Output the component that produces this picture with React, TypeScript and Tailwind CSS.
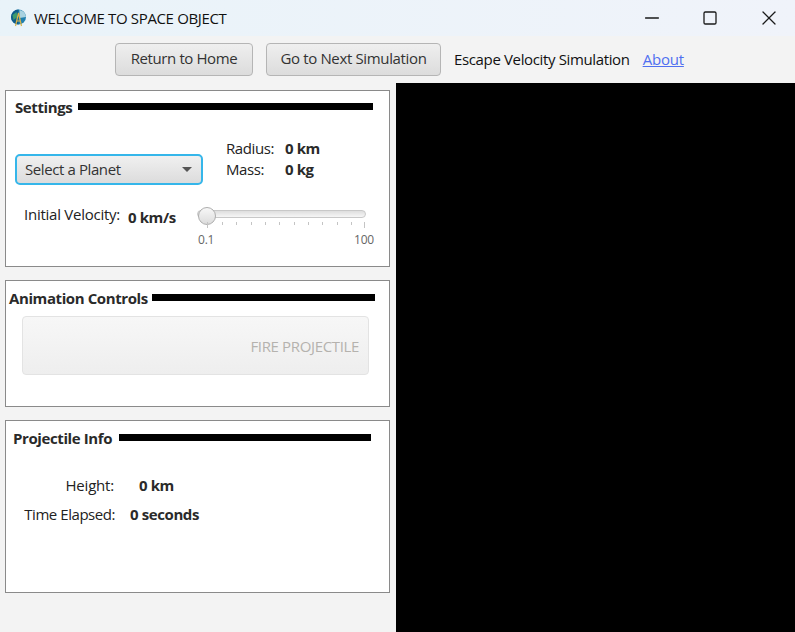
import type { ReactNode } from 'react';
import { Minus, Square, X } from 'lucide-react';

const minorTicks = [222, 236, 251, 265, 279, 294, 308, 322, 337, 351];

function AppIcon() {
  return (
    <svg width="17" height="18" viewBox="0 0 17 18" aria-hidden className="shrink-0">
      <circle cx="8.5" cy="8" r="7.5" fill="#1f7fae" />
      <path d="M1 8 A7.5 7.5 0 0 1 8.5 .5 L8.5 15.5 A7.5 7.5 0 0 1 1 8Z" fill="#0f5c8a" />
      <path d="M9.5 1 A7.5 7.5 0 0 1 16 8 L9.5 9Z" fill="#a9d2e0" />
      <path d="M2.5 6 L6.5 3 L7.5 8 L3.5 11Z" fill="#3d9b6d" />
      <path d="M5.5 17 L8.5 4 L11.5 17 M6.5 12 H10.5" fill="none" stroke="#d9b44a" strokeWidth="1.2" />
    </svg>
  );
}

function Panel({
  title,
  gap,
  pad,
  barWidth,
  className,
  children,
}: {
  title: string;
  gap: string;
  pad: string;
  barWidth: string;
  className: string;
  children: ReactNode;
}) {
  return (
    <section className={`border border-[#8a8a8a] bg-white ${className}`}>
      <div className={`flex items-start ${pad} ${gap}`}>
        <h3 className="text-[15px] leading-5 font-bold tracking-[-0.4px] text-[#2a2a2a]">{title}</h3>
        <div className={`mt-[6px] h-[7px] bg-black ${barWidth}`} />
      </div>
      {children}
    </section>
  );
}

export default function App() {
  return (
    <div className="flex h-[632px] w-[795px] flex-col overflow-hidden bg-[#f3f3f3] font-['Open_Sans',sans-serif] text-[#222]">
      <header className="flex h-9 shrink-0 items-center bg-gradient-to-r from-[#e9f3f9] to-[#f0f3fa] pl-[10px]">
        <AppIcon />
        <span className="ml-[7px] text-[15px] tracking-[-0.35px] text-[#111]">WELCOME TO SPACE OBJECT</span>
        <div className="ml-auto flex items-center text-[#1a1a1a]">
          <Minus size={22} absoluteStrokeWidth strokeWidth={1.3} />
          <Square size={16} absoluteStrokeWidth strokeWidth={1.3} className="ml-[39px]" />
          <X size={24} absoluteStrokeWidth strokeWidth={1.3} className="mr-[14px] ml-[39px]" />
        </div>
      </header>

      <nav className="flex h-[47px] shrink-0 items-start pt-[7px] pl-[115px] text-[15px]">
        <button className="h-[33px] w-[138px] rounded-[4px] border border-[#b5b5b5] bg-gradient-to-b from-[#efefef] to-[#dcdcdc] pb-[2px] tracking-[-0.4px] text-[#333]">
          Return to Home
        </button>
        <button className="ml-[13px] h-[33px] w-[175px] rounded-[4px] border border-[#b5b5b5] bg-gradient-to-b from-[#efefef] to-[#dcdcdc] pb-[2px] tracking-[-0.35px] text-[#333]">
          Go to Next Simulation
        </button>
        <span className="mt-[6px] ml-[13px] leading-5 tracking-[-0.36px] text-[#111]">Escape Velocity Simulation</span>
        <a className="mt-[6px] ml-[13px] leading-5 tracking-[-0.2px] text-[#4f6ff0] underline">About</a>
      </nav>

      <main className="flex min-h-0 flex-1">
        <aside className="flex w-[396px] shrink-0 flex-col pt-[7px] pl-[5px]">
          <Panel title="Settings" pad="pt-[6px] pl-[9px]" gap="gap-[6px]" barWidth="w-[295px]" className="h-[177px] w-[385px]">
            <div className="mt-[21px] flex items-start pl-[9px]">
              <div className="mt-[16px] flex h-[31px] w-[188px] items-center justify-between rounded-[5px] border-2 border-[#35b6ea] bg-gradient-to-b from-[#f0f0f0] to-[#dcdcdc] pr-[9px] pl-[8px]">
                <span className="text-[15px] tracking-[-0.4px] text-[#333]">Select a Planet</span>
                <span className="h-0 w-0 border-x-[5px] border-t-[5px] border-x-transparent border-t-[#555]" />
              </div>
              <dl className="ml-[23px] grid grid-cols-[59px_auto] text-[15px] leading-[21px] tracking-[-0.4px]">
                <dt className="text-[#222]">Radius:</dt>
                <dd className="font-bold text-[#2a2a2a]">0 km</dd>
                <dt className="text-[#222]">Mass:</dt>
                <dd className="font-bold text-[#2a2a2a]">0 kg</dd>
              </dl>
            </div>
            <div className="mt-[15px] flex items-start pl-[18px]">
              <span className="mt-[4px] w-[104px] text-[15px] leading-5 tracking-[-0.25px] text-[#222]">Initial Velocity:</span>
              <span className="mt-[7px] w-[69px] text-[15px] leading-5 font-bold tracking-[-0.4px] text-[#2a2a2a]">0 km/s</span>
              <div className="w-[180px]">
                <div className="relative mt-[10px] h-[8px] w-[169px] rounded-full border border-[#c8c8c8] bg-gradient-to-b from-[#dedede] to-[#f6f6f6]">
                  <span className="absolute top-[-4px] left-[0px] h-[18px] w-[18px] rounded-full border border-[#adadad] bg-gradient-to-b from-[#f7f7f7] to-[#dcdcdc]" />
                </div>
                <div className="relative h-[10px]">
                  <span className="absolute top-[4px] left-[10px] h-[6px] w-px bg-[#c4c4c4]" />
                  {minorTicks.map((x) => (
                    <span key={x} className="absolute top-[4px] h-[3px] w-px bg-[#c4c4c4]" style={{ left: x - 197 }} />
                  ))}
                  <span className="absolute top-[4px] left-[167px] h-[6px] w-px bg-[#c4c4c4]" />
                </div>
                <div className="mt-[4px] flex w-[177px] justify-between pl-[1px] text-[12px] leading-4 tracking-[-0.2px] text-[#666]">
                  <span>0.1</span>
                  <span>100</span>
                </div>
              </div>
            </div>
          </Panel>

          <Panel title="Animation Controls" pad="pt-[7px] pl-[3px]" gap="gap-[4px]" barWidth="w-[223px]" className="mt-[13px] h-[127px] w-[385px]">
            <div className="mt-[8px] ml-[16px] flex h-[59px] w-[347px] items-center justify-end rounded-[4px] border border-[#e3e3e3] bg-gradient-to-b from-[#f7f7f7] to-[#eeeeee] pt-[1px] pr-[9px]">
              <span className="text-[15px] tracking-[-0.35px] text-[#b5b2ae]">FIRE PROJECTILE</span>
            </div>
          </Panel>

          <Panel title="Projectile Info" pad="pt-[7px] pl-[7px]" gap="gap-[7px]" barWidth="w-[252px]" className="mt-[13px] h-[173px] w-[385px]">
            <dl className="mt-[27px] grid grid-cols-[109px_auto] gap-y-[9px] text-[15px] leading-5 tracking-[-0.4px]">
              <dt className="pr-[1px] text-right tracking-[-0.2px] text-[#222]">Height:</dt>
              <dd className="ml-[24px] font-bold text-[#2a2a2a]">0 km</dd>
              <dt className="text-right tracking-[-0.45px] text-[#222]">Time Elapsed:</dt>
              <dd className="ml-[15px] font-bold text-[#2a2a2a]">0 seconds</dd>
            </dl>
          </Panel>
        </aside>
        <div className="flex-1 bg-black" />
      </main>
    </div>
  );
}
